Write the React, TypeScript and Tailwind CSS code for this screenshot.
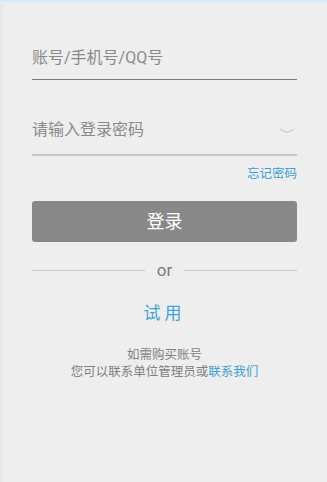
export default function App() {
  return (
    <main className="min-h-[482px] bg-[#eeeeee] font-['Roboto','Noto_Sans_CJK_SC',sans-serif]">
      <div className="h-[4px] bg-gradient-to-b from-[#cfeaf5] to-[#e8f2f5]" />
      <div className="flex min-h-[478px] flex-col border-l-[3px] border-[#e7e7e7] pl-[29px] pr-[30px]">
        <div className="mt-[32px] flex h-[44px] items-center border-b border-[#7c7c7c]">
          <span className="text-[16px] text-[#8a8a8a]">账号/手机号/QQ号</span>
        </div>

        <div className="mt-[26px] flex h-[50px] items-center justify-between border-b-2 border-[#c6c6c6]">
          <span className="text-[16px] text-[#8a8a8a]">请输入登录密码</span>
          <svg width="16" height="8" viewBox="0 0 16 8" className="mr-[2px] mt-[2px]">
            <path d="M1 2 Q8 8 15 2" fill="none" stroke="#cfcfcf" strokeWidth="1.3" />
          </svg>
        </div>

        <div className="mt-[10px] flex justify-end">
          <span className="text-[12.5px] leading-[16px] text-[#3d9fd1]">忘记密码</span>
        </div>

        <button className="mt-[19px] h-[41px] rounded-[3px] bg-[#888888] text-[18px] text-white">
          登录
        </button>

        <div className="mt-[18px] flex h-5 items-center gap-[12px]">
          <div className="h-px flex-1 bg-[#c9c9c9]" />
          <span className="text-[17px] leading-5 text-[#7a7a7a]">or</span>
          <div className="h-px flex-1 bg-[#c9c9c9]" />
        </div>

        <div className="mt-[21px] text-center text-[17px] leading-[24px] tracking-[4px] text-[#3ea4d4]">
          试用
        </div>

        <div className="mt-[21px] text-center text-[12.5px] leading-[17px] text-[#808080]">
          <p>如需购买账号</p>
          <p>
            您可以联系单位管理员或<span className="text-[#3d9fd1]">联系我们</span>
          </p>
        </div>
      </div>
    </main>
  );
}
